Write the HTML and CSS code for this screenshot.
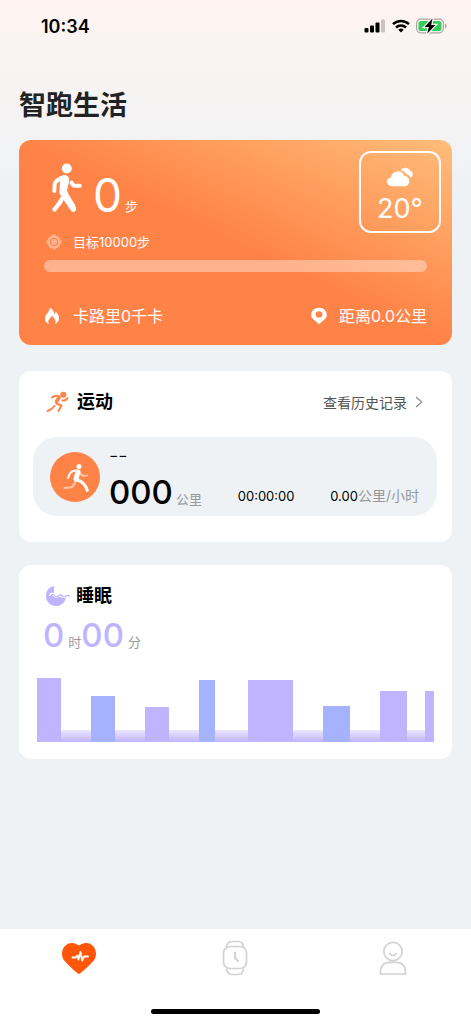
FILE: index.html
```html
<!DOCTYPE html>
<html lang="zh-CN">
<head>
<meta charset="utf-8">
<meta name="viewport" content="width=device-width, initial-scale=1">
<title>智跑生活</title>
<link rel="stylesheet" href="styles.css">
</head>
<body>
<div class="status">
  <span class="status-time">10:34</span>
  <div class="status-icons">
    <svg width="22" height="14" viewBox="0 0 22 14"><rect x="0.5" y="9" width="4" height="4.5" rx="1"/><rect x="6" y="6.500" width="4" height="7" rx="1"/><rect x="11.500" y="3.500" width="4" height="10" rx="1"/><rect x="17" y="0.500" width="4" height="13" rx="1" opacity=".2"/></svg>
    <svg width="18" height="14" viewBox="0 0 18 14" fill="none" stroke="#000" stroke-width="2.500"><path d="M1 5.200a11.400 11.400 0 0 1 16 0"/><path d="M4 8.500a7.100 7.100 0 0 1 10 0"/><path d="M9 13.500l-2.700-2.700a3.800 3.800 0 0 1 5.400 0z" fill="#000" stroke="none"/></svg>
    <svg width="31" height="16" viewBox="0 0 31 16"><rect x=".6" y="1.200" width="26.800" height="13.600" rx="4.200" fill="none" stroke="#a9a5a4" stroke-width="1.200"/><rect x="2.500" y="3" width="23" height="10" rx="2.600" fill="#34cf5b"/><path d="M29 5.500c2 .8 2 4.200 0 5z" fill="#a9a5a4"/><path d="M16.500.5L8.500 9h4.300L11.300 15.500 19.500 7h-4.300z" stroke="#fff6f3" stroke-width="2.400" paint-order="stroke" fill="#000"/></svg>
  </div>
</div>

<main class="page">
  <h1 class="title">智跑生活</h1>

  <section class="hero">
    <div class="hero-top">
      <div class="steps">
        <svg width="32" height="50" viewBox="0 0 32 50" fill="none" stroke="#fff" stroke-linecap="round" stroke-linejoin="round"><circle cx="15.800" cy="5.500" r="5" fill="#fff" stroke="none"/><path d="M10 13.500Q13 11.200 16.500 13.500Q18.500 15.500 17.500 19L15.500 27.500L17.500 32L23.500 42Q25.500 46 24 48Q21 50 19.500 46.500L10.500 33Q8 30.500 9 26z" fill="#fff" stroke-width="1"/><path d="M10 15Q4 18.500 3.700 21L3.300 28" stroke-width="4"/><path d="M20.500 19.500Q22 22.500 23.500 22.700H28.800" stroke-width="4"/><path d="M10.700 36Q10 38 8.500 40L3.500 46.500" stroke-width="4.400"/></svg>
        <span class="steps-num">0</span><span class="steps-unit">步</span>
      </div>
      <div class="weather">
        <svg width="28" height="20" viewBox="0 0 28 20" fill="#fff"><path d="M14.500 3.500C15.500 1.500 18 .5 20.500 1C22.300 1.300 23.500 2.300 24.200 3.800C27 4.500 27.800 8 25.500 10L24.300 10.700C23.500 8.500 22.300 7.500 20.200 7C19 4.800 17 3.700 14.500 3.500z"/><path d="M6.500 19.200C-.5 19.200-.5 10.800 5 10.500C6.200 3.200 16.500 2.500 18.500 9C24.500 9 25 18.500 19 19.200z"/></svg>
        <span>20°</span>
      </div>
    </div>
    <div class="goal">
      <svg class="goal-icon" width="18" height="18" viewBox="0 0 18 18" fill="#fff"><path fill-rule="evenodd" d="M9 1L11 2.500Q14.500 3.500 15.500 7L17 9L15.500 11Q14.500 14.500 11 15.500L9 17L7 15.500Q3.500 14.500 2.500 11L1 9L2.500 7Q3.500 3.500 7 2.500zM9 5a4 4 0 1 0 0 8a4 4 0 0 0 0-8z"/><circle cx="9" cy="9" r="2.900"/></svg>
      <label for="goal">目标10000步</label>
    </div>
    <progress id="goal" class="bar" value="0" max="10000"></progress>
    <div class="metrics">
      <span class="metric"><svg width="18" height="18" viewBox="0 0 18 18" fill="#fff"><path d="M6.300 17C3.800 16.500 2 14.500 2 11.500C2 7.500 6.500 5.500 6.700 .8C10 2.200 11 4.800 11.300 7.300C12.200 6.500 12.500 5.500 12.600 4.300C14.500 6.500 16 8.700 16 11.300C16 14.500 14.300 16.500 11.600 17C13 15.500 13 13.500 11.500 12L9 8.500C8.500 11 5 12 5.200 14.700C5.300 15.700 5.700 16.500 6.300 17z"/></svg>卡路里0千卡</span>
      <span class="metric"><svg width="18" height="18" viewBox="0 0 18 18" fill="#fff" fill-rule="evenodd"><path d="M9 17.200L3.300 12.300C-1.200 8 2 .8 9 .8S19.200 8 14.700 12.300zM9 4.300a3.400 3.100 0 1 0 0 6.200a3.400 3.100 0 0 0 0-6.200z"/></svg>距离0.0公里</span>
    </div>
  </section>

  <section class="card">
    <div class="card-head">
      <svg width="24" height="22" viewBox="0 0 24 22" fill="none" stroke="#ff8347" stroke-width="2" stroke-linecap="round" stroke-linejoin="round"><circle cx="17.300" cy="3.800" r="3" fill="#ff8347" stroke="none"/><path d="M6 6.500Q9.500 3.500 13 5.500M21.500 7Q20 10 16.500 9.500"/><path d="M13 6.500L10.500 10.500" stroke-width="3.600"/><path d="M10.500 12.500L15.500 14.500L12.500 20"/><path d="M8.500 15Q6 18.500 1.500 20"/></svg>
      <h2>运动</h2>
      <a class="more" href="#history">查看历史记录<svg width="8" height="12" viewBox="0 0 8 12" fill="none" stroke="#8d8d8d" stroke-width="1.200"><path d="M1 1l5.800 5L1 11"/></svg></a>
    </div>
    <div class="run">
      <svg class="run-icon" width="50" height="50" viewBox="0 0 50 50" fill="none" stroke-linecap="round" stroke-linejoin="round"><circle cx="25" cy="25" r="25" fill="#ff8347"/><path d="M25.500 29Q24 35 20 35.500L14.500 36" stroke="#ffc6a8" stroke-width="2.200"/><path d="M30 21Q32 25 37 23.500" stroke="#ffc6a8" stroke-width="1.800"/><circle cx="29" cy="14.500" r="2.500" fill="#fff"/><path d="M27.500 18.500Q20 17.500 18 26" stroke="#fff" stroke-width="2"/><path d="M28 20L26 27" stroke="#fff" stroke-width="5"/><path d="M27 28Q35 30 37.300 38.500" stroke="#fff" stroke-width="3"/></svg>
      <div class="run-main">
        <span class="run-date">−−</span>
        <span class="run-dist"><b>000</b><i>公里</i></span>
      </div>
      <span class="run-time">00:00:00</span>
      <span class="run-speed">0.00<i>公里/小时</i></span>
    </div>
  </section>

  <section class="card sleep">
    <div class="card-head">
      <svg width="26" height="22" viewBox="0 0 26 22"><path d="M9 1V7.500Q11 9.500 12 11.500L21 13C19.500 18.500 15.500 21 11 21C5 21 1 16.500 1 11C1 5.500 4 1.800 9 1z" fill="#c0b3ff"/><path d="M5.500 11Q6 8 9 9.500Q11 12 13 10.500T18 11T22 10.500L25 11.500" fill="none" stroke="#fff" stroke-width="3"/><path d="M6 11.500Q6.500 8.500 9 10Q11 12.500 13 11Q15.500 9 17.500 11Q19.500 12.500 21 11Q22.500 9.500 25 11.500" fill="none" stroke="#c0b3ff" stroke-width="1.200"/></svg>
      <h2>睡眠</h2>
    </div>
    <p class="duration"><b>0</b><i>时</i><b>00</b><i class="minute">分</i></p>
    <div class="chart">
      <span class="col b1"></span><span class="col b2 blue"></span><span class="col b3"></span><span class="col b4 blue"></span><span class="col b5"></span><span class="col b6 blue"></span><span class="col b7"></span><span class="col b8"></span>
    </div>
  </section>
</main>

<nav class="tabs">
  <div class="tab-row">
    <button class="tab" aria-label="健康"><svg width="36" height="36" viewBox="0 0 36 36"><path d="M18 34C16.500 34 3.500 21.500 2.500 19.500C-1.500 12 3 3 11 3C14 3 16.500 4.500 18 5.500C19.500 4.500 22 3 25 3C33 3 37.500 12 33.500 19.500C32.500 21.500 19.500 34 18 34z" fill="#ff560a"/><path d="M11.500 17.500h3l1.700-2 1.200 4 2-7.500 1.800 8.500 1.800-4h4" fill="none" stroke="#fff" stroke-width="1.900" stroke-linecap="round" stroke-linejoin="round"/></svg></button>
    <button class="tab" aria-label="设备"><svg width="36" height="36" viewBox="0 0 36 36" fill="none" stroke="#d2d2d2" stroke-width="1.700"><rect x="5.500" y="6.500" width="23" height="22" rx="6.500"/><path d="M8.500 7Q9 1.500 14 1.500h6Q25 1.500 25.500 7M8.500 28.500Q9 34.500 14 34.500h6Q25 34.500 25.500 28.500"/><path d="M17 12.500V18l3 3" stroke-width="2.200" stroke-linecap="round"/></svg></button>
    <button class="tab" aria-label="我的"><svg width="36" height="36" viewBox="0 0 36 36" fill="none" stroke="#d2d2d2" stroke-width="1.700"><circle cx="18" cy="11.500" r="9.200"/><path d="M14.500 13.500Q18 17.500 21.500 13.500" stroke-linecap="round"/><path d="M5.500 34V31Q6 22.500 14.500 22.300h7Q30 22.500 30.500 31v3z"/></svg></button>
  </div>
  <div class="home"></div>
</nav>
</body>
</html>
```
FILE: styles.css
```css
* { box-sizing: border-box; }
body {
  margin: 0;
  min-height: 100vh;
  display: flex;
  flex-direction: column;
  color: #000;
  background: linear-gradient(#fff4f1 0, #eef2f5 190px) #eef2f5;
  font-family: Inter, "Noto Sans CJK SC", sans-serif;
}
svg { display: block; flex: none; }
i { font-style: normal; }
b { font-weight: inherit; }
.status {
  display: flex;
  justify-content: space-between;
  align-items: center;
  height: 52px;
  padding: 0 24px 0 41px;
}
.status-time { font-size: 18px; font-weight: 600; }
.status-icons { display: flex; align-items: center; gap: 6px; }
.page { flex: 1; padding: 34px 19px 24px; }
.title {
  margin: 0 0 14px;
  font-size: 27px;
  line-height: 40px;
  font-weight: 600;
  color: #222;
}
.hero {
  padding: 11px 11px 17px 24px;
  border-radius: 12px;
  color: #fff;
  background: linear-gradient(to bottom left, #ffbd7a 0%, #ff8347 50%);
}
.hero-top { display: flex; justify-content: space-between; }
.steps { display: flex; align-items: flex-start; padding: 12px 0 0 8px; }
.steps-num { margin-left: 10px; font-size: 46px; line-height: 64px; }
.steps-unit { margin: 34px 0 0 3px; font-size: 13px; line-height: 18px; }
.weather {
  width: 82px;
  height: 82px;
  padding-top: 14px;
  border: 2px solid #fff;
  border-radius: 12px;
  display: flex;
  flex-direction: column;
  align-items: center;
  font-size: 27px;
  line-height: 44px;
}
.goal {
  display: flex;
  align-items: center;
  gap: 10px;
  padding-left: 2px;
  font-size: 13px;
  line-height: 18px;
}
.goal-icon { opacity: .4; }
.bar {
  appearance: none;
  display: block;
  width: calc(100% - 15px);
  height: 12px;
  margin: 9px 0 32px 1px;
  border: 0;
  border-radius: 6px;
  overflow: hidden;
  background: rgba(255, 255, 255, .38);
}
.bar::-webkit-progress-bar { background: transparent; }
.bar::-webkit-progress-value { background: #fff; }
.metrics { display: flex; justify-content: space-between; padding-right: 14px; font-size: 16px; line-height: 24px; }
.metric { display: flex; align-items: center; gap: 11px; }
.metrics .metric:first-child { gap: 12px; }
.card { margin-top: 26px; padding: 18px 15px 26px 14px; border-radius: 12px; background: #fff; }
.card-head { display: flex; align-items: center; padding: 0 14px 0 13px; height: 26px; }
.card-head h2 { margin: 0 auto 0 7px; font-size: 18px; line-height: 26px; font-weight: 600; }
.more { display: flex; align-items: center; gap: 8px; color: #555; font-size: 14px; text-decoration: none; }
.run {
  display: flex;
  align-items: center;
  height: 79px;
  margin-top: 22px;
  padding: 0 18px 0 17px;
  border-radius: 24px;
  background: #eef2f5;
  font-size: 13px;
}
.run-main { align-self: flex-start; display: flex; flex-direction: column; gap: 4px; margin-left: 9px; padding-top: 9px; }
.run-date { font-size: 14px; line-height: 18px; }
.run-dist { line-height: 48px; }
.run-dist b { font-size: 33px; font-weight: 500; }
.run-dist i { margin-left: 3px; color: #999; }
.run-time { margin: 38px auto 0; line-height: 20px; }
.run-speed { margin-top: 38px; line-height: 20px; }
.run-speed i { color: #999; font-size: 14px; }
.sleep { margin-top: 23px; padding: 18px 18px 17px; }
.sleep .card-head { padding-left: 8px; }
.sleep .card-head h2 { margin-left: 5px; }
.duration { margin: 4px 0 14px 6px; line-height: 44px; }
.duration b { font-size: 33px; color: #c0b3ff; font-weight: 500; }
.duration i { font-size: 13px; color: #999; }
.duration b + i { margin-left: 4px; }
.chart {
  display: grid;
  grid-template-columns: 24fr 30fr 24fr 30fr 24fr 30fr 16fr 33fr 45fr 30fr 27fr 30fr 27fr 18fr 9fr;
  align-items: end;
  height: 64px;
  background: linear-gradient(#ece8ff, #c0b3ff) bottom / 100% 12px no-repeat;
}
.col { background: #c0b3ff; }
.blue { background: #a5b3ff; }
.b1 { grid-column: 1; height: 100%; }
.b2 { grid-column: 3; height: 72%; }
.b3 { grid-column: 5; height: 54%; }
.b4 { grid-column: 7; height: 97%; }
.b5 { grid-column: 9; height: 97%; }
.b6 { grid-column: 11; height: 57%; }
.b7 { grid-column: 13; height: 80%; }
.b8 { grid-column: 15; height: 80%; }
.tabs { position: sticky; bottom: 0; padding: 11px 0 10px; background: #fff; }
.tab-row { display: grid; grid-template-columns: repeat(3, 1fr); }
.tab { display: flex; justify-content: center; padding: 0; border: 0; background: none; }
.home { width: 36%; height: 5px; margin: 33px auto 0; border-radius: 3px; background: #000; }
```
